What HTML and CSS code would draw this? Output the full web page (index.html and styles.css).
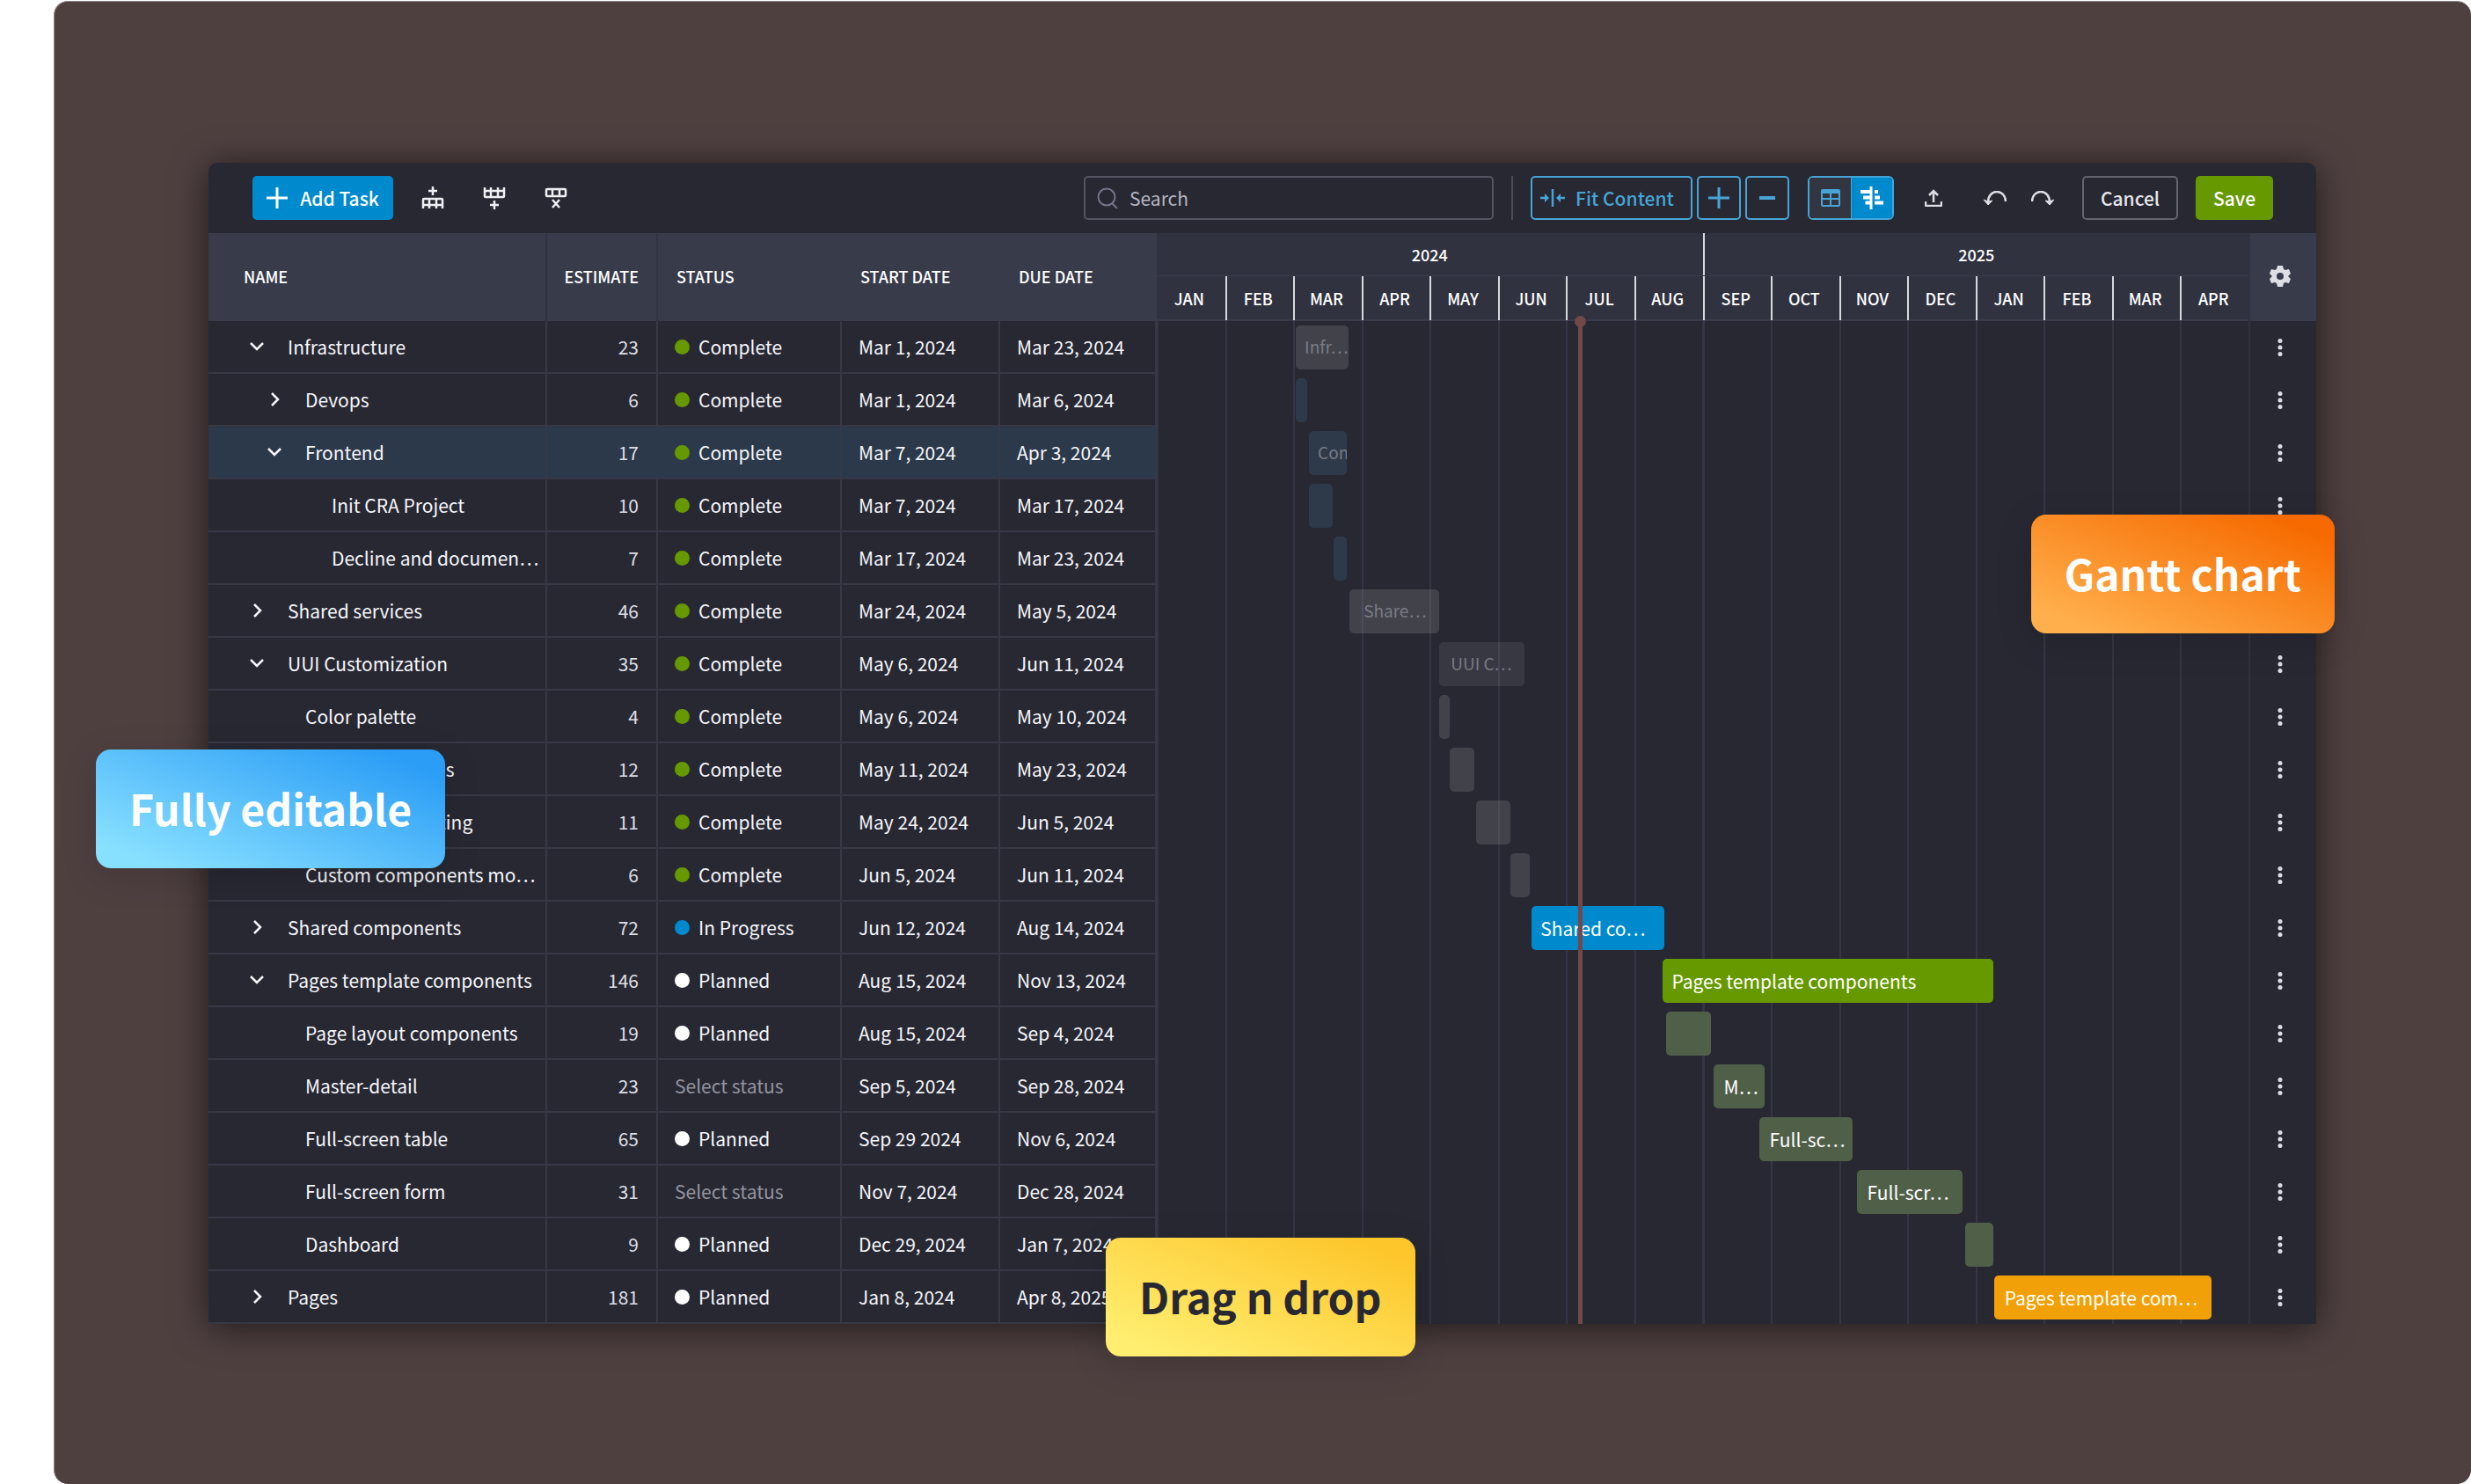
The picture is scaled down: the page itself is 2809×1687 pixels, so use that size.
FILE: index.html
```html
<!DOCTYPE html>
<html lang="en">
<head>
<meta charset="utf-8">
<title>Project timeline</title>
<link rel="stylesheet" href="styles.css">
</head>
<body>
<svg class="sprite" aria-hidden="true">
  <symbol id="plus" viewBox="0 0 24 24"><path d="M12 0v24M0 12h24" fill="none" stroke="currentColor" stroke-width="3"/></symbol>
  <symbol id="minus" viewBox="0 0 24 24"><path d="M3 12h18" fill="none" stroke="currentColor" stroke-width="4"/></symbol>
  <symbol id="row-above" viewBox="0 0 26 26"><path d="M13 0v10M8 5h10M2 25V15q0-1 1-1h20q1 0 1 1v10M2 21h22M9 14v11M17 14v11" fill="none" stroke="currentColor" stroke-width="2.5"/></symbol>
  <symbol id="row-below" viewBox="0 0 26 26"><path d="M13 16v10M8 21h10M2 1v10q0 1 1 1h20q1 0 1-1V1M2 5h22M9 1v11M17 1v11" fill="none" stroke="currentColor" stroke-width="2.5"/></symbol>
  <symbol id="row-delete" viewBox="0 0 26 26"><path d="M3 3h20q1 0 1 1v6q0 1-1 1H3q-1 0-1-1V4q0-1 1-1zM9 3v8M17 3v8M9 15l8 9M17 15l-8 9" fill="none" stroke="currentColor" stroke-width="2.5"/></symbol>
  <symbol id="search" viewBox="0 0 24 24"><circle cx="11" cy="11" r="9.500" fill="none" stroke="currentColor" stroke-width="2"/><path d="M17 18l6 6" fill="none" stroke="currentColor" stroke-width="2"/></symbol>
  <symbol id="fit" viewBox="0 0 28 20"><path d="M14 0v20M0 10h7M28 10h-7" fill="none" stroke="currentColor" stroke-width="2.5"/><path d="M5 5l5 5-5 5zM23 5l-5 5 5 5z" fill="currentColor"/></symbol>
  <symbol id="table" viewBox="0 0 22 20"><path d="M2 0h18q2 0 2 2v16q0 2-2 2H2q-2 0-2-2V2q0-2 2-2zM2 5v5h8V5zM12 5v5h8V5zM2 12v6h8v-6zM12 12v6h8v-6z" fill="currentColor" fill-rule="evenodd"/></symbol>
  <symbol id="gantt" viewBox="0 0 26 26"><path d="M10.500 0h3v26h-3zM0 4h11v4H0zM16 4h4v4h-4zM3 10.500h8v4H3zM16 10.500h6v4h-6zM5.500 16.500H11v4H5.500zM16 16.500h10v4H16z" fill="currentColor"/></symbol>
  <symbol id="upload" viewBox="0 0 20 20"><path d="M10 15V2M5 7l5-5 5 5M1 14v4q0 1 1 1h16q1 0 1-1v-4" fill="none" stroke="currentColor" stroke-width="2.500"/></symbol>
  <symbol id="undo" viewBox="0 0 26 16"><path d="M5 13C5 6 9 1 15 1s10 5 10 11" fill="none" stroke="currentColor" stroke-width="2.500"/><path d="M0 10l5 2 5-1-5 5z" fill="currentColor" stroke="currentColor"/></symbol>
  <symbol id="redo" viewBox="0 0 26 16"><path d="M21 13C21 6 17 1 11 1S1 6 1 12" fill="none" stroke="currentColor" stroke-width="2.500"/><path d="M26 10l-5 2-5-1 5 5z" fill="currentColor" stroke="currentColor"/></symbol>
  <symbol id="gear" viewBox="0 0 24 24"><path fill="currentColor" fill-rule="evenodd" d="M9 0h6l1 4 2 1 4-1 2 5-3 3 3 3-2 5-4-1-2 1-1 4H9l-1-4-2-1-4 1-2-5 3-3-3-3 2-5 4 1 2-1zM12 8a4 4 0 1 0 0 8a4 4 0 1 0 0-8z"/></symbol>
  <symbol id="dots" viewBox="0 0 6 20"><g fill="currentColor"><circle cx="3" cy="2.500" r="2.500"/><circle cx="3" cy="10" r="2.500"/><circle cx="3" cy="17.500" r="2.500"/></g></symbol>
  <symbol id="down" viewBox="0 0 24 24"><path d="M5 8l7 7 7-7" fill="none" stroke="currentColor" stroke-width="2.500"/></symbol>
  <symbol id="right" viewBox="0 0 24 24"><path d="M9 5l7 7-7 7" fill="none" stroke="currentColor" stroke-width="2.500"/></symbol>
</svg>

<main class="stage">
  <section class="panel">
    <div class="toolbar">
      <button class="btn primary"><svg class="i24"><use href="#plus"/></svg>Add Task</button>
      <div class="row-tools">
        <button class="tool" aria-label="Insert row above"><svg class="i26"><use href="#row-above"/></svg></button>
        <button class="tool" aria-label="Insert row below"><svg class="i26"><use href="#row-below"/></svg></button>
        <button class="tool" aria-label="Delete row"><svg class="i26"><use href="#row-delete"/></svg></button>
      </div>
      <label class="search"><svg class="i24"><use href="#search"/></svg><input type="search" placeholder="Search" aria-label="Search"></label>
      <span class="divider"></span>
      <div class="zoom">
        <button class="btn outline"><svg class="fit"><use href="#fit"/></svg>Fit Content</button>
        <button class="btn outline square" aria-label="Zoom in"><svg class="i24"><use href="#plus"/></svg></button>
        <button class="btn outline square" aria-label="Zoom out"><svg class="i24"><use href="#minus"/></svg></button>
      </div>
      <div class="views">
        <button class="view" aria-label="Table view"><svg class="grid-icon"><use href="#table"/></svg></button>
        <button class="view active" aria-label="Timeline view"><svg class="i26"><use href="#gantt"/></svg></button>
      </div>
      <div class="history">
        <button class="tool" aria-label="Export"><svg class="up"><use href="#upload"/></svg></button>
        <button class="tool undo" aria-label="Undo"><svg class="arc"><use href="#undo"/></svg></button>
        <button class="tool" aria-label="Redo"><svg class="arc"><use href="#redo"/></svg></button>
      </div>
      <button class="btn cancel">Cancel</button>
      <button class="btn save">Save</button>
    </div>

    <table class="tasks">
      <colgroup><col class="c-name"><col class="c-est"><col class="c-status"><col class="c-start"><col class="c-due"><col><col class="c-menu"></colgroup>
      <thead>
        <tr>
          <th class="name">NAME</th><th class="est">ESTIMATE</th><th class="status">STATUS</th><th class="date">START DATE</th><th class="date">DUE DATE</th>
          <th class="scale">
            <div class="years"><span>2024</span><span>2025</span></div>
            <div class="months"><span>JAN</span><span>FEB</span><span>MAR</span><span>APR</span><span>MAY</span><span>JUN</span><span>JUL</span><span>AUG</span><span>SEP</span><span>OCT</span><span>NOV</span><span>DEC</span><span>JAN</span><span>FEB</span><span>MAR</span><span>APR</span></div>
            <i class="today"></i>
          </th>
          <th class="menu"><button class="tool" aria-label="Settings"><svg class="i24"><use href="#gear"/></svg></button></th>
        </tr>
      </thead>
      <tbody>
        <tr><td class="name"><button class="fold" aria-label="Collapse"><svg class="i24"><use href="#down"/></svg></button>Infrastructure</td><td class="est">23</td><td class="status"><i class="dot done"></i>Complete</td><td class="date">Mar 1, 2024</td><td class="date">Mar 23, 2024</td><td class="lane"><div class="bar past" style="margin-left:12.74%;width:4.84%">Infr…</div></td><td class="menu"><button class="tool" aria-label="Row menu"><svg class="dots"><use href="#dots"/></svg></button></td></tr>
        <tr><td class="name l1"><button class="fold" aria-label="Expand"><svg class="i24"><use href="#right"/></svg></button>Devops</td><td class="est">6</td><td class="status"><i class="dot done"></i>Complete</td><td class="date">Mar 1, 2024</td><td class="date">Mar 6, 2024</td><td class="lane"><div class="bar sub" style="margin-left:12.74%;width:1.05%"></div></td><td class="menu"><button class="tool" aria-label="Row menu"><svg class="dots"><use href="#dots"/></svg></button></td></tr>
        <tr class="selected"><td class="name l1"><button class="fold" aria-label="Collapse"><svg class="i24"><use href="#down"/></svg></button>Frontend</td><td class="est">17</td><td class="status"><i class="dot done"></i>Complete</td><td class="date">Mar 7, 2024</td><td class="date">Apr 3, 2024</td><td class="lane"><div class="bar sub" style="margin-left:13.95%;width:3.47%">Com</div></td><td class="menu"><button class="tool" aria-label="Row menu"><svg class="dots"><use href="#dots"/></svg></button></td></tr>
        <tr><td class="name leaf2">Init CRA Project</td><td class="est">10</td><td class="status"><i class="dot done"></i>Complete</td><td class="date">Mar 7, 2024</td><td class="date">Mar 17, 2024</td><td class="lane"><div class="bar sub" style="margin-left:13.95%;width:2.18%"></div></td><td class="menu"><button class="tool" aria-label="Row menu"><svg class="dots"><use href="#dots"/></svg></button></td></tr>
        <tr><td class="name leaf2">Decline and documen…</td><td class="est">7</td><td class="status"><i class="dot done"></i>Complete</td><td class="date">Mar 17, 2024</td><td class="date">Mar 23, 2024</td><td class="lane"><div class="bar sub" style="margin-left:16.21%;width:1.21%"></div></td><td class="menu"><button class="tool" aria-label="Row menu"><svg class="dots"><use href="#dots"/></svg></button></td></tr>
        <tr><td class="name"><button class="fold" aria-label="Expand"><svg class="i24"><use href="#right"/></svg></button>Shared services</td><td class="est">46</td><td class="status"><i class="dot done"></i>Complete</td><td class="date">Mar 24, 2024</td><td class="date">May 5, 2024</td><td class="lane"><div class="bar past roomy" style="margin-left:17.66%;width:8.23%">Share…</div></td><td class="menu"><button class="tool" aria-label="Row menu"><svg class="dots"><use href="#dots"/></svg></button></td></tr>
        <tr><td class="name"><button class="fold" aria-label="Collapse"><svg class="i24"><use href="#down"/></svg></button>UUI Customization</td><td class="est">35</td><td class="status"><i class="dot done"></i>Complete</td><td class="date">May 6, 2024</td><td class="date">Jun 11, 2024</td><td class="lane"><div class="bar faint" style="margin-left:25.89%;width:7.82%">UUI C…</div></td><td class="menu"><button class="tool" aria-label="Row menu"><svg class="dots"><use href="#dots"/></svg></button></td></tr>
        <tr><td class="name leaf1">Color palette</td><td class="est">4</td><td class="status"><i class="dot done"></i>Complete</td><td class="date">May 6, 2024</td><td class="date">May 10, 2024</td><td class="lane"><div class="bar past" style="margin-left:25.89%;width:.97%"></div></td><td class="menu"><button class="tool" aria-label="Row menu"><svg class="dots"><use href="#dots"/></svg></button></td></tr>
        <tr><td class="name leaf1">Typography rules</td><td class="est">12</td><td class="status"><i class="dot done"></i>Complete</td><td class="date">May 11, 2024</td><td class="date">May 23, 2024</td><td class="lane"><div class="bar past" style="margin-left:26.85%;width:2.26%"></div></td><td class="menu"><button class="tool" aria-label="Row menu"><svg class="dots"><use href="#dots"/></svg></button></td></tr>
        <tr><td class="name leaf1">Components listing</td><td class="est">11</td><td class="status"><i class="dot done"></i>Complete</td><td class="date">May 24, 2024</td><td class="date">Jun 5, 2024</td><td class="lane"><div class="bar past" style="margin-left:29.23%;width:3.15%"></div></td><td class="menu"><button class="tool" aria-label="Row menu"><svg class="dots"><use href="#dots"/></svg></button></td></tr>
        <tr><td class="name leaf1">Custom components mo…</td><td class="est">6</td><td class="status"><i class="dot done"></i>Complete</td><td class="date">Jun 5, 2024</td><td class="date">Jun 11, 2024</td><td class="lane"><div class="bar past" style="margin-left:32.42%;width:1.77%"></div></td><td class="menu"><button class="tool" aria-label="Row menu"><svg class="dots"><use href="#dots"/></svg></button></td></tr>
        <tr><td class="name"><button class="fold" aria-label="Expand"><svg class="i24"><use href="#right"/></svg></button>Shared components</td><td class="est">72</td><td class="status"><i class="dot progress"></i>In Progress</td><td class="date">Jun 12, 2024</td><td class="date">Aug 14, 2024</td><td class="lane"><div class="bar blue" style="margin-left:34.35%;width:12.18%">Shared co…</div></td><td class="menu"><button class="tool" aria-label="Row menu"><svg class="dots"><use href="#dots"/></svg></button></td></tr>
        <tr><td class="name"><button class="fold" aria-label="Collapse"><svg class="i24"><use href="#down"/></svg></button>Pages template components</td><td class="est">146</td><td class="status"><i class="dot"></i>Planned</td><td class="date">Aug 15, 2024</td><td class="date">Nov 13, 2024</td><td class="lane"><div class="bar green" style="margin-left:46.37%;width:30.24%">Pages template components</div></td><td class="menu"><button class="tool" aria-label="Row menu"><svg class="dots"><use href="#dots"/></svg></button></td></tr>
        <tr><td class="name leaf1">Page layout components</td><td class="est">19</td><td class="status"><i class="dot"></i>Planned</td><td class="date">Aug 15, 2024</td><td class="date">Sep 4, 2024</td><td class="lane"><div class="bar olive" style="margin-left:46.69%;width:4.11%"></div></td><td class="menu"><button class="tool" aria-label="Row menu"><svg class="dots"><use href="#dots"/></svg></button></td></tr>
        <tr><td class="name leaf1">Master-detail</td><td class="est">23</td><td class="status empty">Select status</td><td class="date">Sep 5, 2024</td><td class="date">Sep 28, 2024</td><td class="lane"><div class="bar olive" style="margin-left:50.97%;width:4.68%">M…</div></td><td class="menu"><button class="tool" aria-label="Row menu"><svg class="dots"><use href="#dots"/></svg></button></td></tr>
        <tr><td class="name leaf1">Full-screen table</td><td class="est">65</td><td class="status"><i class="dot"></i>Planned</td><td class="date">Sep 29 2024</td><td class="date">Nov 6, 2024</td><td class="lane"><div class="bar olive" style="margin-left:55.16%;width:8.55%">Full-sc…</div></td><td class="menu"><button class="tool" aria-label="Row menu"><svg class="dots"><use href="#dots"/></svg></button></td></tr>
        <tr><td class="name leaf1">Full-screen form</td><td class="est">31</td><td class="status empty">Select status</td><td class="date">Nov 7, 2024</td><td class="date">Dec 28, 2024</td><td class="lane"><div class="bar olive" style="margin-left:64.11%;width:9.68%">Full-scr…</div></td><td class="menu"><button class="tool" aria-label="Row menu"><svg class="dots"><use href="#dots"/></svg></button></td></tr>
        <tr><td class="name leaf1">Dashboard</td><td class="est">9</td><td class="status"><i class="dot"></i>Planned</td><td class="date">Dec 29, 2024</td><td class="date">Jan 7, 2024</td><td class="lane"><div class="bar olive" style="margin-left:74.03%;width:2.58%"></div></td><td class="menu"><button class="tool" aria-label="Row menu"><svg class="dots"><use href="#dots"/></svg></button></td></tr>
        <tr><td class="name"><button class="fold" aria-label="Expand"><svg class="i24"><use href="#right"/></svg></button>Pages</td><td class="est">181</td><td class="status"><i class="dot"></i>Planned</td><td class="date">Jan 8, 2024</td><td class="date">Apr 8, 2025</td><td class="lane"><div class="bar orange" style="margin-left:76.69%;width:19.92%">Pages template com…</div></td><td class="menu"><button class="tool" aria-label="Row menu"><svg class="dots"><use href="#dots"/></svg></button></td></tr>
      </tbody>
    </table>
  </section>
  <strong class="tag tag-edit">Fully editable</strong>
  <strong class="tag tag-gantt">Gantt chart</strong>
  <strong class="tag tag-drag">Drag n drop</strong>
</main>
</body>
</html>
```

FILE: styles.css
```css
* { box-sizing: border-box; }
body {
  margin: 0;
  background: #fff;
  color: #f5f6fa;
  font: 400 21px/28px "Noto Sans CJK KR", "Noto Sans CJK SC", "Noto Sans", sans-serif;
}
button, input { font: inherit; color: inherit; }
button { display: inline-flex; align-items: center; justify-content: center; border: 0; padding: 0; background: none; }
svg { display: block; flex: none; overflow: visible; }
.sprite { position: absolute; width: 0; height: 0; }
.i24 { width: 24px; height: 24px; }
.i26 { width: 26px; height: 26px; }
.fit { width: 28px; height: 20px; }
.grid-icon { width: 22px; height: 20px; }
.up { width: 20px; height: 20px; }
.arc { width: 26px; height: 16px; }
.dots { width: 6px; height: 20px; }

.stage {
  position: relative;
  margin: 1px 0 0 61px;
  padding: 183px 176px 182px 175px;
  border: 1px solid #8f8686;
  border-width: 1px 0 0 1px;
  border-radius: 16px;
  background: #4f4040;
}
.panel {
  border-radius: 10px 10px 0 0;
  background: #282833;
  box-shadow: 0 4px 40px rgba(0, 0, 0, .6);
}

.toolbar { display: flex; align-items: center; height: 80px; padding: 0 49px 0 50px; }
.btn { height: 50px; border-radius: 5px; font-weight: 500; }
.primary { width: 160px; gap: 14px; background: #008ace; color: #fff; }
.row-tools { display: flex; gap: 44px; margin-left: 32px; }
.tool { color: #f0f0f4; }
.search {
  display: flex; align-items: center; gap: 13px;
  width: 466px; height: 50px; margin-left: auto; padding: 0 13px;
  border: 2px solid #535562; border-radius: 5px; color: #74768a;
}
.search input { flex: 1; min-width: 0; border: 0; padding: 0; background: none; outline: 0; color: #c0c1c9; }
.search input::placeholder { color: #b4b5bf; opacity: 1; }
.divider { width: 2px; height: 50px; margin: 0 20px; background: #4a4c5b; }
.zoom { display: flex; gap: 5px; }
.outline { width: 184px; gap: 12px; padding: 0 10px 0 0; border: 2px solid #46a5d6; color: #46a5d6; }
.square { width: 50px; padding: 0; }
.views { display: flex; margin-left: 21px; border: 2px solid #46a5d6; border-radius: 6px; overflow: hidden; }
.view { width: 47px; height: 46px; background: #333541; color: #46a5d6; }
.view.active { background: #008ace; color: #fff; border-left: 1px solid #46a5d6; }
.history { display: flex; align-items: center; gap: 28px; margin: 0 32px 0 35px; }
.history .tool { color: #dcdce2; }
.undo { margin-left: 19px; }
.cancel { width: 109px; border: 2px solid #63646f; color: #e6e6ea; }
.save { width: 88px; margin-left: 20px; background: #690; color: #fff; }

.tasks { width: 100%; table-layout: fixed; border-collapse: separate; border-spacing: 0; }
.c-name { width: 385px; }
.c-est { width: 126px; }
.c-status { width: 209px; }
.c-start { width: 180px; }
.c-due { width: 178px; }
.c-menu { width: 77px; }
th, td { padding: 0; text-align: left; white-space: nowrap; }
th { height: 100px; padding-bottom: 3px; background: #383b4a; font-size: 18px; line-height: 24px; font-weight: 500; color: #fff; }
th.name { padding-left: 40px; border-right: 2px solid #303340; }
th.est { padding-right: 20px; text-align: right; border-right: 2px solid #303340; }
th.status { padding-left: 21px; }
th.date { padding-left: 21px; }
td { height: 60px; border-bottom: 2px solid #363846; }
td.name, td.est, td.status, td.date { border-right: 2px solid #363846; }
td.name { padding-left: 43px; }
td.name.l1 { padding-left: 63px; }
td.name.leaf1 { padding-left: 110px; }
td.name.leaf2 { padding-left: 140px; }
td.est { padding-right: 20px; text-align: right; color: #dedfe5; }
td.status { padding-left: 19px; }
td.status.empty { color: #93949e; }
td.date { padding-left: 19px; }
.selected td.name, .selected td.est, .selected td.status, .selected td.date { background: #2c394a; }
.selected td.est { border-right-color: #2c394a; }
.fold { margin-right: 23px; vertical-align: -3px; }
.dot { display: inline-block; width: 17px; height: 17px; margin-right: 10px; border-radius: 50%; background: #fff; vertical-align: 0; }
.dot.done { background: #690; }
.dot.progress { background: #008ace; }

th.scale { position: relative; padding: 0; background: #303240; border-bottom: 2px solid #383b4a; text-align: center; }
.years, .months { display: grid; }
.years { grid-template-columns: 1fr 1fr; height: 49px; line-height: 48px; border-bottom: 1px solid #383b4a; }
.years span + span { border-left: 2px solid #d8d8dc; }
.months { grid-template-columns: repeat(16, 1fr); height: 49px; line-height: 50px; }
.months span { padding-right: 4px; }
.months span + span { border-left: 2px solid #d8d8dc; }
.today { position: absolute; z-index: 1; left: 38.6%; top: 100px; width: 5px; height: 1140px; background: #724848; }
.today::before { content: ""; position: absolute; left: -4px; top: -6px; width: 13px; height: 13px; border-radius: 50%; background: #724848; }

td.lane {
  padding: 5px 0; border-bottom: 0; vertical-align: top;
  background: repeating-linear-gradient(90deg, #343645 0 2px, transparent 2px calc(100% / 16));
}
.bar { height: 50px; padding-left: 10px; border-radius: 5px; line-height: 50px; overflow: hidden; color: #fff; }
.past, .sub, .faint { color: #7a7b85; font-size: 19px; line-height: 48px; }
.past { background: rgba(255, 255, 255, .12); }
.sub { background: #2e3a4a; }
.faint { padding-left: 13px; background: rgba(255, 255, 255, .08); }
.roomy { padding-left: 16px; }
.blue { background: #008ace; }
.green { background: #690; }
.olive { padding-left: 12px; background: #505f48; }
.orange { padding-left: 12px; background: #f2a007; }
th.menu, td.menu { padding-right: 8px; border-left: 2px solid #303240; }
td.menu { border-bottom: 0; }
.menu .tool { display: flex; margin: 0 auto; color: #dedfe5; }

.tag {
  position: absolute; z-index: 2;
  padding: 0 38px 2px; border-radius: 17px;
  font-size: 48px; line-height: 133px; font-weight: 700; white-space: nowrap;
  box-shadow: 0 10px 40px rgba(0, 0, 0, .15);
}
.tag-edit { left: 47px; top: 850px; color: #fff; background: linear-gradient(22deg, #88e0ff 10%, #2b9df6 90%); }
.tag-gantt { right: 155px; top: 583px; color: #fff; background: linear-gradient(22deg, #ffb04d 10%, #f66a00 90%); }
.tag-drag { left: 1195px; top: 1405px; color: #282833; background: linear-gradient(22deg, #ffee70 10%, #fdc62b 90%); }
```
